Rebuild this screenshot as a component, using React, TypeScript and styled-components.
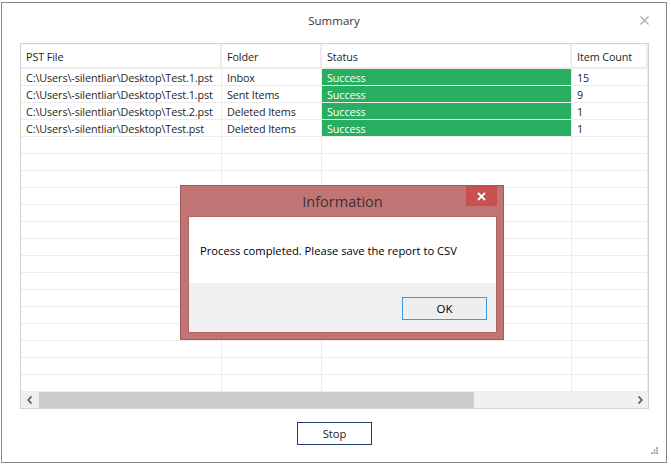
import { createGlobalStyle } from 'styled-components';
import styled from 'styled-components';

const GlobalStyle = createGlobalStyle`
html, body {
  margin: 0;
  padding: 0;
  background: #ffffff;
}
body {
  font-family: "Open Sans", "Noto Sans", "Liberation Sans", sans-serif;
  color: #1e1e1e;
}
* {
  box-sizing: border-box;
}
`;

const Page = styled.div`
position: relative;
width: 671px;
height: 465px;
padding: 2px 4px 2px 1px;
`;

const Window = styled.div`
position: relative;
display: flex;
flex-direction: column;
height: 100%;
background: #ffffff;
border: 1px solid #8a8a8a;
`;

const TitleBar = styled.div`
display: grid;
grid-template-columns: 1fr auto 1fr;
align-items: center;
height: 40px;
padding: 0 17px 6px;
`;

const WindowTitle = styled.div`
grid-column: 2;
font-size: 11.5px;
color: #333333;
`;

const CloseGlyph = styled.div`
justify-self: end;
display: flex;
`;

const Grid = styled.div`
display: flex;
flex-direction: column;
height: 366px;
margin: 0 17px 0 18px;
border: 1px solid #d2d2d2;
overflow: hidden;
`;

const Row = styled.div<{ $height: number }>`
display: grid;
grid-template-columns: 201px 100px 250px 1fr;
height: ${(p) => p.$height}px;
flex-shrink: 0;
`;

const HeadCell = styled.div`
display: flex;
align-items: center;
padding: 1px 5px 0;
font-size: 10.8px;
letter-spacing: -0.1px;
white-space: nowrap;
color: #1e1e1e;
background: #ffffff;
border-right: 2px solid #ececec;
border-bottom: 2px solid #ececec;
border-top: 1px solid #f4f4f4;
`;

const Cell = styled.div<{ $ok?: boolean }>`
display: flex;
align-items: center;
padding: 0 5px;
font-size: 10.8px;
letter-spacing: -0.1px;
white-space: nowrap;
overflow: hidden;
color: ${(p) => (p.$ok ? '#ffffff' : '#1e1e1e')};
background: ${(p) => (p.$ok ? '#27ae60' : 'transparent')};
background-clip: padding-box;
border-right: 1px solid #ececec;
border-bottom: 1px solid #ececec;
`;

const Body = styled.div`
flex: 1;
display: flex;
flex-direction: column;
overflow: hidden;
`;

const ScrollBar = styled.div`
display: flex;
align-items: center;
height: 16px;
flex-shrink: 0;
background: #f0f0f0;
`;

const ScrollArrow = styled.div`
display: flex;
align-items: center;
justify-content: center;
width: 17px;
height: 100%;
`;

const ScrollTrack = styled.div`
flex: 1;
height: 100%;
padding-left: 1px;
`;

const ScrollThumb = styled.div`
height: 100%;
background: #cdcdcd;
`;

const Footer = styled.div`
display: flex;
justify-content: center;
padding-top: 13px;
`;

const StopButton = styled.button`
width: 75px;
height: 23px;
margin-left: 1px;
font-family: inherit;
font-size: 11.2px;
color: #1e1e1e;
background: #ffffff;
border: 1px solid #1f3f70;
`;

const Grip = styled.div`
position: absolute;
right: 8px;
bottom: 8px;
display: flex;
`;

const Dialog = styled.div`
position: absolute;
left: 180px;
top: 185px;
width: 324px;
height: 155px;
display: flex;
flex-direction: column;
background: #c07574;
border: 1px solid #a25a59;
padding: 0 6px 6px 7px;
`;

const DialogTitleBar = styled.div`
display: grid;
grid-template-columns: 1fr auto 1fr;
height: 30px;
`;

const DialogTitle = styled.div`
grid-column: 2;
align-self: center;
font-size: 14.5px;
color: #3f3030;
padding-top: 1px;
`;

const DialogClose = styled.div`
justify-self: end;
display: flex;
align-items: center;
justify-content: center;
width: 31px;
height: 20px;
background: #c75050;
`;

const DialogClient = styled.div`
flex: 1;
display: flex;
flex-direction: column;
border: 1px solid #ad6564;
`;

const Message = styled.div`
display: flex;
align-items: center;
height: 66px;
padding-left: 11px;
font-size: 11.2px;
color: #000000;
background: #ffffff;
`;

const DialogFooter = styled.div`
flex: 1;
display: flex;
justify-content: flex-end;
align-items: flex-start;
padding: 14px 9px 0 0;
background: #f0f0f0;
`;

const OkButton = styled.button`
width: 85px;
height: 23px;
font-family: inherit;
font-size: 11.5px;
color: #000000;
background: #eeeeee;
border: 1px solid #3c98e0;
`;

type Job = { file: string; folder: string; count: string };

const jobs: Job[] = [
  { file: 'C:\\Users\\-silentliar\\Desktop\\Test.1.pst', folder: 'Inbox', count: '15' },
  { file: 'C:\\Users\\-silentliar\\Desktop\\Test.1.pst', folder: 'Sent Items', count: '9' },
  { file: 'C:\\Users\\-silentliar\\Desktop\\Test.2.pst', folder: 'Deleted Items', count: '1' },
  { file: 'C:\\Users\\-silentliar\\Desktop\\Test.pst', folder: 'Deleted Items', count: '1' },
];

const emptyRows = Array.from({ length: 15 }, (_, i) => i);

function App() {
  return (
    <>
      <GlobalStyle />
      <Page>
        <Window>
          <TitleBar>
            <WindowTitle>Summary</WindowTitle>
            <CloseGlyph>
              <svg width="9" height="9" viewBox="0 0 9 9">
                <path d="M0.5 0.5 L8.5 8.5 M8.5 0.5 L0.5 8.5" stroke="#a8a8a8" strokeWidth="1.2" />
              </svg>
            </CloseGlyph>
          </TitleBar>

          <Grid>
            <Row $height={25}>
              <HeadCell>PST File</HeadCell>
              <HeadCell>Folder</HeadCell>
              <HeadCell>Status</HeadCell>
              <HeadCell>Item Count</HeadCell>
            </Row>
            <Body>
              {jobs.map((job, i) => (
                <Row $height={17} key={i}>
                  <Cell>{job.file}</Cell>
                  <Cell>{job.folder}</Cell>
                  <Cell $ok>Success</Cell>
                  <Cell>{job.count}</Cell>
                </Row>
              ))}
              {emptyRows.map((i) => (
                <Row $height={17} key={`e${i}`}>
                  <Cell />
                  <Cell />
                  <Cell />
                  <Cell />
                </Row>
              ))}
            </Body>
            <ScrollBar>
              <ScrollArrow>
                <svg width="6" height="8" viewBox="0 0 6 8">
                  <path d="M4.5 0.5 L1.2 4 L4.5 7.5" stroke="#606060" strokeWidth="1.8" fill="none" />
                </svg>
              </ScrollArrow>
              <ScrollTrack>
                <ScrollThumb style={{ width: '73.4%' }} />
              </ScrollTrack>
              <ScrollArrow>
                <svg width="6" height="8" viewBox="0 0 6 8">
                  <path d="M1.5 0.5 L4.8 4 L1.5 7.5" stroke="#606060" strokeWidth="1.8" fill="none" />
                </svg>
              </ScrollArrow>
            </ScrollBar>
          </Grid>

          <Footer>
            <StopButton>Stop</StopButton>
          </Footer>

          <Grip>
            <svg width="7" height="7" viewBox="0 0 7 7" fill="#b0b0b0">
              <rect x="5" y="0" width="2" height="2" />
              <rect x="2.5" y="2.5" width="2" height="2" />
              <rect x="5" y="2.5" width="2" height="2" />
              <rect x="0" y="5" width="2" height="2" />
              <rect x="2.5" y="5" width="2" height="2" />
              <rect x="5" y="5" width="2" height="2" />
            </svg>
          </Grip>
        </Window>

        <Dialog>
          <DialogTitleBar>
            <DialogTitle>Information</DialogTitle>
            <DialogClose>
              <svg width="9" height="9" viewBox="0 0 9 9">
                <path d="M1 1 L8 8 M8 1 L1 8" stroke="#ffffff" strokeWidth="1.8" />
              </svg>
            </DialogClose>
          </DialogTitleBar>
          <DialogClient>
            <Message>Process completed. Please save the report to CSV</Message>
            <DialogFooter>
              <OkButton>OK</OkButton>
            </DialogFooter>
          </DialogClient>
        </Dialog>
      </Page>
    </>
  );
}

export default App;
